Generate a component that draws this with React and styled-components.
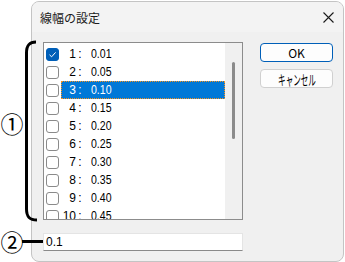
import React from "react";
import styled, { createGlobalStyle } from "styled-components";

const GlobalStyle = createGlobalStyle`
  html, body {
    margin: 0;
    padding: 0;
    background: #ffffff;
  }
  body {
    font-family: "Noto Sans CJK JP", "Liberation Sans", sans-serif;
  }
`;

const Stage = styled.div`
  position: relative;
  width: 345px;
  height: 262px;
  padding: 1px 0 0 31px;
  box-sizing: border-box;
  overflow: hidden;
`;

const Dialog = styled.div`
  width: 313px;
  height: 261px;
  box-sizing: border-box;
  border: 1px solid #c4c4c4;
  border-radius: 8px;
  background: #f0f0f0;
  display: flex;
  flex-direction: column;
  overflow: hidden;
`;

const TitleBar = styled.div`
  height: 30px;
  flex: none;
  display: flex;
  align-items: center;
  justify-content: space-between;
  padding: 0 9px 0 8px;
  background: #f3f3f3;
  font-size: 12px;
  color: #1b1b1b;
`;

const CloseButton = styled.div`
  width: 12px;
  height: 12px;
  display: flex;
  align-items: center;
  justify-content: center;
`;

const Body = styled.div`
  flex: 1;
  display: flex;
  gap: 17px;
  padding: 10px 0 0 11px;
`;

const LeftColumn = styled.div`
  display: flex;
  flex-direction: column;
  gap: 13px;
`;

const ListBox = styled.div`
  width: 200px;
  height: 178px;
  box-sizing: border-box;
  border: 1px solid #8c8c8c;
  background: #ffffff;
  display: flex;
  overflow: hidden;
`;

const Rows = styled.div`
  flex: 1;
  padding-top: 2px;
`;

const Row = styled.div`
  height: 18px;
  display: flex;
  align-items: center;
`;

const Check = styled.div`
  width: 13px;
  height: 13px;
  box-sizing: border-box;
  margin-left: 2px;
  border-radius: 3px;
  border: 1px solid ${(p) => (p.$on ? "#005fb8" : "#8a8a8a")};
  background: ${(p) => (p.$on ? "#005fb8" : "#ffffff")};
  display: flex;
  align-items: center;
  justify-content: center;
`;

const Label = styled.div`
  margin-left: 2px;
  flex: 1;
  height: 18px;
  box-sizing: border-box;
  display: flex;
  align-items: center;
  font-family: "Liberation Sans", sans-serif;
  font-size: 12px;
  color: ${(p) => (p.$sel ? "#ffffff" : "#000000")};
  background: ${(p) => (p.$sel ? "#0078d7" : "transparent")};
  border: 1px dotted ${(p) => (p.$sel ? "#f7931e" : "transparent")};
`;

const Num = styled.span`
  width: 14px;
  text-align: right;
`;

const Colon = styled.span`
  width: 8px;
  text-align: center;
`;

const Value = styled.span`
  margin-left: 7px;
  display: inline-block;
  transform: scaleX(0.88);
  transform-origin: left center;
`;

const ScrollTrack = styled.div`
  width: 17px;
  flex: none;
  background: #f0f0f0;
  display: flex;
  justify-content: center;
  padding-top: 19px;
  box-sizing: border-box;
`;

const Thumb = styled.div`
  width: 3px;
  height: 77px;
  border-radius: 2px;
  background: #8b8b8b;
`;

const TextField = styled.div`
  width: 200px;
  height: 18px;
  box-sizing: border-box;
  background: #ffffff;
  border: 1px solid #e4e4e4;
  border-bottom-color: #8a8a8a;
  padding-left: 2px;
  display: flex;
  align-items: center;
  font-family: "Liberation Sans", sans-serif;
  font-size: 12px;
  color: #000000;
`;

const Buttons = styled.div`
  display: flex;
  flex-direction: column;
  gap: 7px;
  padding-top: 1px;
`;

const Button = styled.div`
  width: 73px;
  height: 19px;
  box-sizing: border-box;
  border-radius: 4px;
  border: 1px solid ${(p) => (p.$primary ? "#005fb8" : "#d0d0d0")};
  background: #fdfdfd;
  display: flex;
  align-items: center;
  justify-content: center;
  font-size: 12px;
  color: #000000;
  overflow: hidden;
`;

const NarrowText = styled.span`
  display: inline-block;
  font-size: 14px;
  white-space: nowrap;
  transform: scaleX(0.54);
`;

const Bracket = styled.svg`
  position: absolute;
  left: 0;
  top: 0;
`;

const Marker = styled.div`
  position: absolute;
  left: 1px;
  top: ${(p) => p.$top}px;
  width: 22px;
  height: 22px;
  display: flex;
  align-items: center;
  justify-content: center;
  font-size: 23px;
  line-height: 1;
  color: #000000;
`;

const Leader = styled.div`
  position: absolute;
  left: 22px;
  top: 240px;
  width: 21px;
  height: 3px;
  background: #000000;
`;

const items = [
  "0.01", "0.05", "0.10", "0.15", "0.20",
  "0.25", "0.30", "0.35", "0.40", "0.45",
];

export default function App() {
  return (
    <>
      <GlobalStyle />
      <Stage>
        <Dialog>
          <TitleBar>
            <span>線幅の設定</span>
            <CloseButton>
              <svg width="11" height="11" viewBox="0 0 11 11">
                <path d="M0.5 0.5 L10.5 10.5 M10.5 0.5 L0.5 10.5" stroke="#1b1b1b" strokeWidth="1.1" />
              </svg>
            </CloseButton>
          </TitleBar>
          <Body>
            <LeftColumn>
              <ListBox>
                <Rows>
                  {items.map((v, i) => (
                    <Row key={v}>
                      <Check $on={i === 0}>
                        {i === 0 && (
                          <svg width="9" height="9" viewBox="0 0 9 9">
                            <path d="M1.5 4.8 L3.6 6.8 L7.6 2.4" fill="none" stroke="#ffffff" strokeWidth="1" />
                          </svg>
                        )}
                      </Check>
                      <Label $sel={i === 2}>
                        <Num>{i + 1}</Num>
                        <Colon>:</Colon>
                        <Value>{v}</Value>
                      </Label>
                    </Row>
                  ))}
                </Rows>
                <ScrollTrack>
                  <Thumb />
                </ScrollTrack>
              </ListBox>
              <TextField>0.1</TextField>
            </LeftColumn>
            <Buttons>
              <Button $primary>OK</Button>
              <Button>
                <NarrowText>キャンセル</NarrowText>
              </Button>
            </Buttons>
          </Body>
        </Dialog>
        <Bracket width="40" height="230" viewBox="0 0 40 230">
          <path
            d="M36 42 C29.5 42 26.5 45 26.5 53 L26.5 209 C26.5 217 29.5 220 37 220"
            fill="none"
            stroke="#000000"
            strokeWidth="3"
          />
        </Bracket>
        <Marker $top={112}>①</Marker>
        <Marker $top={230}>②</Marker>
        <Leader />
      </Stage>
    </>
  );
}
